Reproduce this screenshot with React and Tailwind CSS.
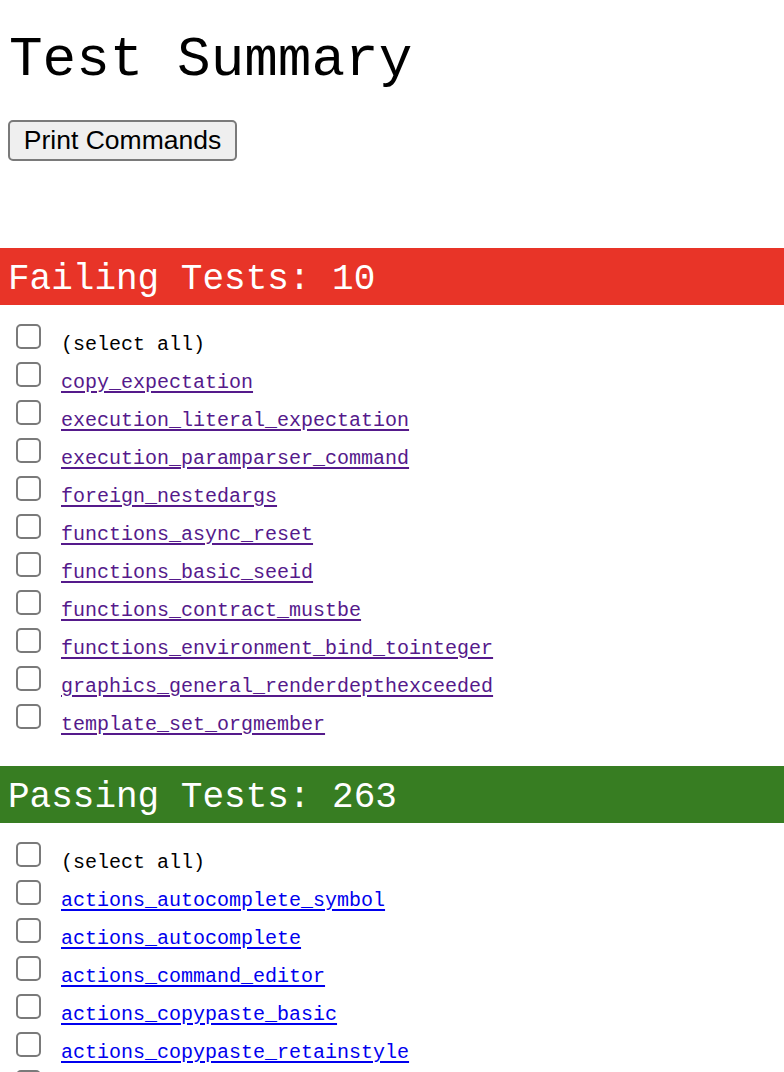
import React from "react";

const failing = [
  "copy_expectation",
  "execution_literal_expectation",
  "execution_paramparser_command",
  "foreign_nestedargs",
  "functions_async_reset",
  "functions_basic_seeid",
  "functions_contract_mustbe",
  "functions_environment_bind_tointeger",
  "graphics_general_renderdepthexceeded",
  "template_set_orgmember",
];

const passing = [
  "actions_autocomplete_symbol",
  "actions_autocomplete",
  "actions_command_editor",
  "actions_copypaste_basic",
  "actions_copypaste_retainstyle",
];

const mono = "font-['Liberation_Mono','Courier_New',monospace]";

function Box() {
  return (
    <div className="w-[25px] h-[25px] shrink-0 rounded-[5px] border-2 border-[#7a7a7a] bg-white" />
  );
}

function Row({ children }) {
  return (
    <div className="flex items-start h-[38px] pl-[16px]">
      <Box />
      <div className={`ml-[20px] pt-[2px] text-[20px] leading-[38px] ${mono}`}>{children}</div>
    </div>
  );
}

function Section({ title, color, linkColor, items, trailing }) {
  return (
    <section>
      <h2
        className={`h-[57px] pt-[6px] pl-[8px] text-[36px] leading-[51px] text-white ${mono} ${color}`}
      >
        {title}
      </h2>
      <div className="pt-[19px] pb-[24px]">
        <Row>
          <span className="text-black">(select all)</span>
        </Row>
        {items.map((t) => (
          <Row key={t}>
            <a
              href="#"
              className={`underline decoration-[2px] underline-offset-[3px] ${linkColor}`}
            >
              {t}
            </a>
          </Row>
        ))}
        {trailing ? <Row>{null}</Row> : null}
      </div>
    </section>
  );
}

export default function App() {
  return (
    <div className="w-[784px] h-[1072px] overflow-hidden bg-white text-black">
      <h1 className={`mt-[28px] pl-[9px] text-[56px] leading-[64px] ${mono}`}>Test Summary</h1>
      <button className="mt-[28px] ml-[8px] w-[229px] h-[41px] flex items-center justify-center rounded-[5px] border-2 border-[#7a7a7a] bg-[#efefef] text-[26.5px] text-black font-['Liberation_Sans',Arial,sans-serif]">
        Print Commands
      </button>
      <div className="h-[87px]" />
      <Section
        title="Failing Tests: 10"
        color="bg-[#e83428]"
        linkColor="text-[#551a8b] decoration-[#551a8b]"
        items={failing}
      />
      <Section
        title="Passing Tests: 263"
        color="bg-[#377d22]"
        linkColor="text-[#0000ee] decoration-[#0000ee]"
        items={passing}
        trailing
      />
    </div>
  );
}
